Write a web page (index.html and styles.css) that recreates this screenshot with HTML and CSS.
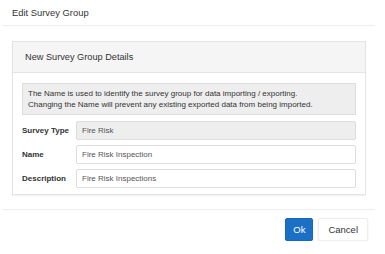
FILE: index.html
```html
<!DOCTYPE html>
<html lang="en">
<head>
  <meta charset="UTF-8">
  <meta name="viewport" content="width=device-width, initial-scale=1.0">
  <title>Edit Survey Group</title>
  <link rel="stylesheet" href="styles.css">
</head>
<body>
  <div class="modal">
    <div class="modal-header">
      <h4>Edit Survey Group</h4>
    </div>
    <div class="modal-body">
      <div class="panel">
        <div class="panel-heading">New Survey Group Details</div>
        <div class="panel-body">
          <div class="note">
            The Name is used to identify the survey group for data importing / exporting.<br>
            Changing the Name will prevent any existing exported data from being imported.
          </div>
          <div class="row">
            <label>Survey Type</label>
            <input type="text" value="Fire Risk" disabled />
          </div>
          <div class="row">
            <label>Name</label>
            <input type="text" value="Fire Risk Inspection" />
          </div>
          <div class="row">
            <label>Description</label>
            <input type="text" value="Fire Risk Inspections" />
          </div>
        </div>
      </div>
    </div>
    <div class="modal-footer">
      <button class="btn btn-primary">Ok</button>
      <button class="btn">Cancel</button>
    </div>
  </div>
</body>
</html>
```

FILE: styles.css
```css
body {
  font-family: "Liberation Sans", Arial, sans-serif;
  font-size: 8px;
  color: #333;
  margin: 0;
  padding: 0;
  background-color: #ffffff;
}
.modal {
  width: 372px;
  margin-left: 3px;
}
.modal-header {
  height: 25px;
  border-bottom: 1px solid #eeeeee;
}
.modal-header h4 {
  margin: 0;
  padding: 6px 0 0 9px;
  font-size: 9.4px;
  font-weight: normal;
  line-height: 13px;
}
.modal-body {
  padding: 15px 9px 14px 9px;
}
.panel {
  border: 1px solid #e4e4e4;
  box-shadow: 0 1px 1px rgba(0, 0, 0, 0.05);
}
.panel-heading {
  height: 30px;
  line-height: 30px;
  padding-left: 12px;
  font-size: 9.2px;
  background-color: #f5f5f5;
  border-bottom: 1px solid #e4e4e4;
}
.panel-body {
  padding: 10px 9px 6px 9px;
}
.note {
  background-color: #eeeeee;
  border: 1px solid #dddddd;
  padding: 4px 5px;
  line-height: 11px;
  margin-bottom: 6px;
}
.row {
  display: flex;
  align-items: center;
  margin-top: 5px;
}
.row label {
  width: 54px;
  font-weight: bold;
}
.row input {
  flex: 1;
  height: 19px;
  box-sizing: border-box;
  border: 1px solid #dddddd;
  border-radius: 2px;
  padding: 0 5px;
  font-family: "Liberation Sans", Arial, sans-serif;
  font-size: 8px;
  color: #555;
  background: #ffffff;
}
.row input:disabled {
  background-color: #eeeeee;
}
.modal-footer {
  border-top: 1px solid #eeeeee;
  padding: 8px 7px 0 0;
  display: flex;
  justify-content: flex-end;
  gap: 5px;
}
.btn {
  height: 23px;
  padding: 0 9px;
  border: 1px solid #eeeeee;
  border-radius: 2px;
  background: #ffffff;
  font-family: "Liberation Sans", Arial, sans-serif;
  font-size: 9.5px;
  color: #333;
  box-shadow: 0 1px 2px rgba(0, 0, 0, 0.1);
}
.btn-primary {
  background-color: #1c6fc6;
  border-color: #1a66b8;
  color: #ffffff;
  padding: 0 7px;
}
```
